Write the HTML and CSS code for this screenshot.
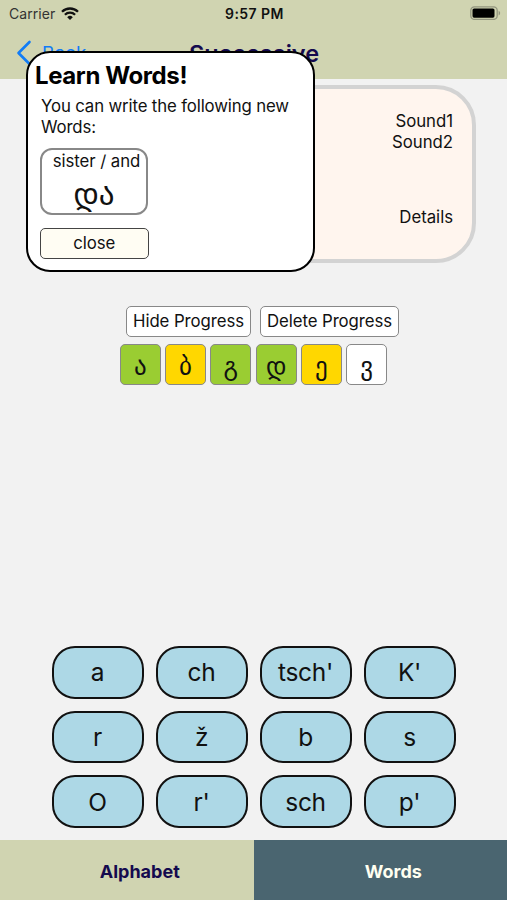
FILE: index.html
```html
<!DOCTYPE html>
<html lang="en">
<head>
<meta charset="utf-8">
<title>Successive</title>
<link rel="stylesheet" href="styles.css">
</head>
<body>
<div class="app">
  <header class="header">
    <div class="status">
      <div class="carrier"><span>Carrier</span>
        <svg class="wifi" viewBox="0 0 18 13" width="18" height="13"><path d="M9 13 6.2 10.2a4 4 0 0 1 5.6 0Z"/><path class="arc" d="M3.9 7.7a7.3 7.3 0 0 1 10.2 0M1 4.8a11.4 11.4 0 0 1 16 0"/></svg>
      </div>
      <span class="time">9:57 PM</span>
      <svg class="battery" viewBox="0 0 31 14" width="31" height="14"><rect class="shell" x=".8" y=".8" width="26.4" height="12.6" rx="3.6"/><rect x="2.5" y="2.5" width="22" height="9.2" rx="1.6"/><path class="cap" d="M28.6 4.8c2 .8 2 3.8 0 4.6Z"/></svg>
    </div>
    <div class="nav">
      <a class="back"><svg viewBox="0 0 16 26" width="16" height="26"><path d="M13.5 2 2.5 13l11 11"/></svg><span>Back</span></a>
      <h1 class="title">Successive</h1>
    </div>
  </header>
  <main class="main">
    <section class="card">
      <div><div>Sound1</div><div>Sound2</div></div>
      <div>Details</div>
    </section>
    <div class="actions"><button>Hide Progress</button><button>Delete Progress</button></div>
    <div class="letters">
      <span class="green">ა</span><span class="gold">ბ</span><span class="green">გ</span><span class="green">დ</span><span class="gold">ე</span><span>ვ</span>
    </div>
    <div class="keys">
      <button>a</button><button>ch</button><button>tsch'</button><button>K'</button>
      <button>r</button><button>ž</button><button>b</button><button>s</button>
      <button>O</button><button>r'</button><button>sch</button><button>p'</button>
    </div>
  </main>
  <nav class="tabs"><a class="tab"><span>Alphabet</span></a><a class="tab active"><span>Words</span></a></nav>
  <div class="modal">
    <h2>Learn Words!</h2>
    <p>You can write the following new Words:</p>
    <div class="word"><span class="meaning">sister / and</span><span class="georgian">და</span></div>
    <button class="close">close</button>
  </div>
</div>
</body>
</html>
```
FILE: styles.css
```css
* { box-sizing: border-box; }
body { margin: 0; background: #f2f2f2; color: #111; font-family: Inter, "DejaVu Sans", sans-serif; font-size: 17px; }
button { font: inherit; color: inherit; padding: 0; }
.app { position: relative; display: flex; flex-direction: column; width: 507px; height: 900px; overflow: hidden; }
.header { height: 79.4px; background: #d0d4b1; flex: none; }
.status { height: 27px; display: grid; grid-template-columns: 1fr auto 1fr; align-items: center; padding: 0 6px 0 9px; font-size: 14px; }
.carrier { display: flex; gap: 6px; align-items: center; color: #333; letter-spacing: .05px; }
.wifi { fill: #111; }
.wifi .arc { fill: none; stroke: #111; stroke-width: 2.3; }
.time { font-weight: 600; font-size: 14px; letter-spacing: .45px; margin-right: 1px; }
.battery { justify-self: end; position: relative; top: -1px; }
.battery .shell { fill: none; stroke: #92957e; stroke-width: 1.3; }
.battery .cap { fill: #92957e; }
.nav { display: grid; grid-template-columns: 1fr auto 1fr; align-items: center; height: 52px; padding: 0 0 0 16px; }
.back { display: flex; align-items: center; gap: 10px; color: #117cf6; font-size: 19px; }
.back svg { fill: none; stroke: #117cf6; stroke-width: 2.6; stroke-linecap: round; stroke-linejoin: round; }
.title { margin: 0 8px 0 -7px; font-size: 23.5px; font-weight: 600; color: #140a4e; }
.main { flex: 1; display: flex; flex-direction: column; align-items: center; padding: 6px 0 12px; }
.card { width: 445px; height: 178px; border: 4px solid #d3d3d3; border-radius: 40px; background: #fff5ee; display: flex; flex-direction: column; justify-content: space-between; align-items: flex-end; padding: 22px 19px 31px; line-height: 21px; text-align: right; font-size: 16.8px; letter-spacing: -.03px; }
.actions { display: flex; gap: 9px; margin: 42.6px 0 0 18px; }
.actions button { height: 31px; width: 125px; border: 1px solid #888; border-radius: 5px; background: #fff; font-size: 16.8px; letter-spacing: -.08px; }
.actions button + button { width: 139px; }
.letters { display: flex; gap: 4.3px; margin: 7px 0 0 0; }
.letters span { width: 41px; height: 41px; border: 1px solid #888; border-radius: 5px; background: #fff; font: 25px/43px "DejaVu Sans", sans-serif; text-align: center; }
.letters .green { background: #9acd32; }
.letters .gold { background: #ffd700; }
.keys { display: grid; grid-template-columns: repeat(4, 92px); grid-auto-rows: 52.7px; gap: 12px; margin-top: auto; }
.keys button { border: 2px solid #111; border-radius: 23px; background: #add8e6; font-size: 24.5px; letter-spacing: -.35px; }
.tabs { display: flex; height: 60px; flex: none; }
.tab { flex: 1; display: flex; align-items: center; justify-content: center; padding: 3px 0 0 26px; background: #d0d4b1; color: #140a4e; font-weight: 700; font-size: 18px; }
.tab.active { background: #4a6570; color: #fffff0; }
.modal { position: absolute; left: 26px; top: 51px; width: 289px; height: 221px; padding: 9px 12px; border: 2px solid #000; border-radius: 24px; background: #fff; display: flex; flex-direction: column; align-items: flex-start; }
.modal h2 { margin: -1px 0 0 -5px; font-size: 24px; line-height: 29px; letter-spacing: -.4px; font-weight: 700; color: #000; white-space: nowrap; }
.modal p { margin: 6px 0 9.5px 1px; width: 255px; line-height: 21px; font-size: 16.8px; letter-spacing: -.14px; }
.word { width: 108px; height: 67px; border: 2px solid #888; border-radius: 12px; display: flex; flex-direction: column; align-items: center; font-size: 16.8px; }
.meaning { line-height: 22px; margin-left: 5px; white-space: nowrap; letter-spacing: -.08px; }
.georgian { font: 31px/44px "DejaVu Sans", sans-serif; }
.close { width: 108.5px; height: 31px; margin-top: 13px; border: 1.5px solid #444; border-radius: 5px; background: #fffdf3; font-size: 16.8px; letter-spacing: -.1px; }
```
